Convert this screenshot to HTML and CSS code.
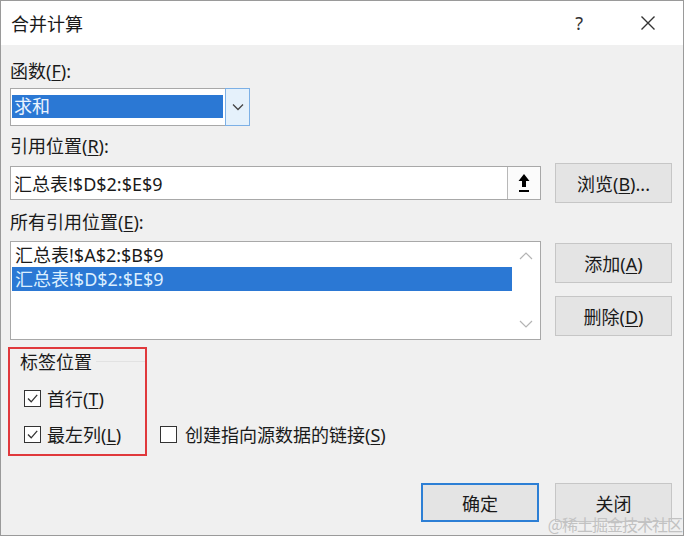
FILE: index.html
```html
<!DOCTYPE html>
<html lang="zh-CN">
<head>
  <meta charset="UTF-8" />
  <title>合并计算</title>
  <link rel="stylesheet" href="styles.css">
</head>
<body>

  <div class="dialog">
    <header class="title-bar">
      <span class="title">合并计算</span>
      <span class="help-btn">?</span>
      <svg class="close-btn" width="16" height="16" viewBox="0 0 16 16">
        <path d="M1.5 1.5 L14.5 14.5 M14.5 1.5 L1.5 14.5" stroke="#333" stroke-width="1.4" fill="none"/>
      </svg>
    </header>

    <main class="dialog-body">
      <div class="label">函数(<u>F</u>):</div>
      <div class="select">
        <div class="select-value"><span class="selected">求和</span></div>
        <div class="select-btn">
          <svg width="12" height="8" viewBox="0 0 12 8">
            <path d="M1 1.5 L6 6.5 L11 1.5" stroke="#444" stroke-width="1.3" fill="none"/>
          </svg>
        </div>
      </div>

      <div class="label">引用位置(<u>R</u>):</div>
      <div class="row ref-row">
        <div class="ref-input">
          <span class="ref-text">汇总表!$D$2:$E$9</span>
          <span class="pick-btn">
            <svg width="14" height="22" viewBox="0 0 14 22">
              <path d="M7 2 L12.5 9 L9 9 L9 15 L5 15 L5 9 L1.5 9 Z" fill="#000"/>
              <rect x="2" y="18" width="10" height="2" fill="#000"/>
            </svg>
          </span>
        </div>
        <button class="btn">浏览(<u>B</u>)...</button>
      </div>

      <div class="label">所有引用位置(<u>E</u>):</div>
      <div class="row list-row">
        <div class="ref-list">
          <ul class="ref-items">
            <li>汇总表!$A$2:$B$9</li>
            <li class="active">汇总表!$D$2:$E$9</li>
          </ul>
          <div class="scroll-col">
            <svg width="14" height="8" viewBox="0 0 14 8">
              <path d="M1 7 L7 1 L13 7" stroke="#b4b4b4" stroke-width="1.2" fill="none"/>
            </svg>
            <svg width="14" height="8" viewBox="0 0 14 8">
              <path d="M1 1 L7 7 L13 1" stroke="#b4b4b4" stroke-width="1.2" fill="none"/>
            </svg>
          </div>
        </div>
        <div class="side-btns">
          <button class="btn">添加(<u>A</u>)</button>
          <button class="btn">删除(<u>D</u>)</button>
        </div>
      </div>

      <div class="options-row">
        <div class="label-group">
          <div class="group-title">
            <span>标签位置</span>
            <span class="group-line"></span>
          </div>
          <div class="check-list">
            <div class="check-item">
              <span class="checkbox">
                <svg width="15" height="15" viewBox="0 0 15 15">
                  <path d="M3 7.5 L6.2 10.8 L12.2 3.8" stroke="#333" stroke-width="1.3" fill="none"/>
                </svg>
              </span>
              <span>首行(<u>T</u>)</span>
            </div>
            <div class="check-item">
              <span class="checkbox">
                <svg width="15" height="15" viewBox="0 0 15 15">
                  <path d="M3 7.5 L6.2 10.8 L12.2 3.8" stroke="#333" stroke-width="1.3" fill="none"/>
                </svg>
              </span>
              <span>最左列(<u>L</u>)</span>
            </div>
          </div>
        </div>
        <div class="check-item link-option">
          <span class="checkbox"></span>
          <span>创建指向源数据的链接(<u>S</u>)</span>
        </div>
      </div>

      <div class="footer">
        <button class="btn btn-primary">确定</button>
        <button class="btn">关闭</button>
      </div>
    </main>

    <div class="watermark">@稀土掘金技术社区</div>
  </div>

</body>
</html>
```

FILE: styles.css
```css
* {
  box-sizing: border-box;
  margin: 0;
  padding: 0;
}

body {
  font-family: "Noto Sans", "Noto Sans CJK SC", sans-serif;
  font-size: 18px;
  color: #1a1a1a;
  background-color: #ffffff;
}

u {
  text-decoration-thickness: 1px;
  text-underline-offset: 2px;
}

/* DIALOG FRAME */
.dialog {
  position: relative;
  width: 684px;
  height: 536px;
  border: 1px solid #9a9a9a;
  display: flex;
  flex-direction: column;
  background-color: #f0f0f0;
}

.title-bar {
  height: 44px;
  background-color: #ffffff;
  display: flex;
  align-items: center;
  padding: 0 27px 0 10px;
}

.title {
  flex: 1;
  font-size: 18px;
}

.help-btn {
  font-size: 18px;
  color: #333;
  margin-right: 57px;
}

.close-btn {
  display: block;
}

/* BODY */
.dialog-body {
  flex: 1;
  padding: 14px 11px 0 9px;
  display: flex;
  flex-direction: column;
}

.label {
  height: 24px;
  line-height: 24px;
}

.row {
  display: flex;
  gap: 14px;
}

/* FUNCTION SELECT */
.select {
  display: flex;
  width: 240px;
  height: 38px;
  margin-top: 5px;
  margin-bottom: 8px;
}

.select-value {
  flex: 1;
  background-color: #fff;
  border: 1px solid #a8a8a8;
  border-right: none;
  padding: 6px 2px 6px 1px;
}

.selected {
  display: block;
  height: 23px;
  line-height: 23px;
  padding-left: 2px;
  background-color: #2b78d4;
  color: #eaf4ff;
}

.select-btn {
  width: 25px;
  background-color: #e5f1fb;
  border: 1px solid #7cb0e6;
  display: flex;
  align-items: center;
  justify-content: center;
}

/* REFERENCE INPUT */
.ref-row {
  align-items: center;
  height: 40px;
  margin-top: 5px;
  margin-bottom: 7px;
}

.ref-input {
  width: 531px;
  height: 34px;
  background-color: #fff;
  border: 1px solid #a8a8a8;
  display: flex;
  align-items: center;
}

.ref-text {
  flex: 1;
  padding-left: 3px;
}

.pick-btn {
  width: 33px;
  height: 100%;
  border-left: 1px solid #b8b8b8;
  background-color: #fbfbfb;
  display: flex;
  align-items: center;
  justify-content: center;
}

/* BUTTONS */
.btn {
  width: 117px;
  height: 40px;
  font-family: inherit;
  font-size: 18px;
  color: #1a1a1a;
  background-color: #e4e4e4;
  border: 1px solid #c6c6c6;
}

.btn-primary {
  width: 118px;
  border: 2px solid #2d7fd5;
}

/* REFERENCE LIST */
.list-row {
  margin-top: 7px;
}

.ref-list {
  width: 531px;
  height: 99px;
  background-color: #fff;
  border: 1px solid #a8a8a8;
  display: flex;
}

.ref-items {
  list-style: none;
  flex: 1;
  padding: 1px 0 0 1px;
}

.ref-items li {
  height: 24px;
  line-height: 24px;
  padding-left: 3px;
}

.ref-items li.active {
  background-color: #2b78d4;
  color: #dcefff;
}

.scroll-col {
  width: 28px;
  display: flex;
  flex-direction: column;
  align-items: center;
  justify-content: space-between;
  padding: 10px 0 11px;
}

.side-btns {
  display: flex;
  flex-direction: column;
  gap: 13px;
  padding-top: 2px;
}

/* LABEL POSITION GROUP */
.options-row {
  display: flex;
  align-items: flex-end;
  margin-top: 7px;
  margin-left: -2px;
}

.label-group {
  width: 139px;
  height: 109px;
  border: 2px solid #e0383c;
  padding: 0 0 8px 14px;
}

.group-title {
  display: flex;
  align-items: center;
  height: 24px;
  margin-left: -4px;
}

.group-line {
  flex: 1;
  height: 1px;
  background-color: #e2e2e2;
  margin: 0 0 0 4px;
}

.check-list {
  display: flex;
  flex-direction: column;
  gap: 12px;
  margin-top: 13px;
}

.check-item {
  display: flex;
  align-items: center;
  gap: 6px;
  height: 24px;
}

.checkbox {
  width: 17px;
  height: 17px;
  border: 1px solid #333;
  background-color: #fff;
  display: flex;
  align-items: center;
  justify-content: center;
}

.link-option {
  margin: 0 0 10px 13px;
  gap: 8px;
}

/* FOOTER */
.footer {
  display: flex;
  justify-content: flex-end;
  gap: 16px;
  margin-top: 27px;
  height: 39px;
}

.footer .btn {
  height: 39px;
}

.watermark {
  position: absolute;
  right: 1px;
  bottom: 1px;
  font-family: "Noto Sans CJK SC", sans-serif;
  font-size: 16px;
  line-height: 20px;
  color: #c2c2c2;
  letter-spacing: -1px;
}
```
